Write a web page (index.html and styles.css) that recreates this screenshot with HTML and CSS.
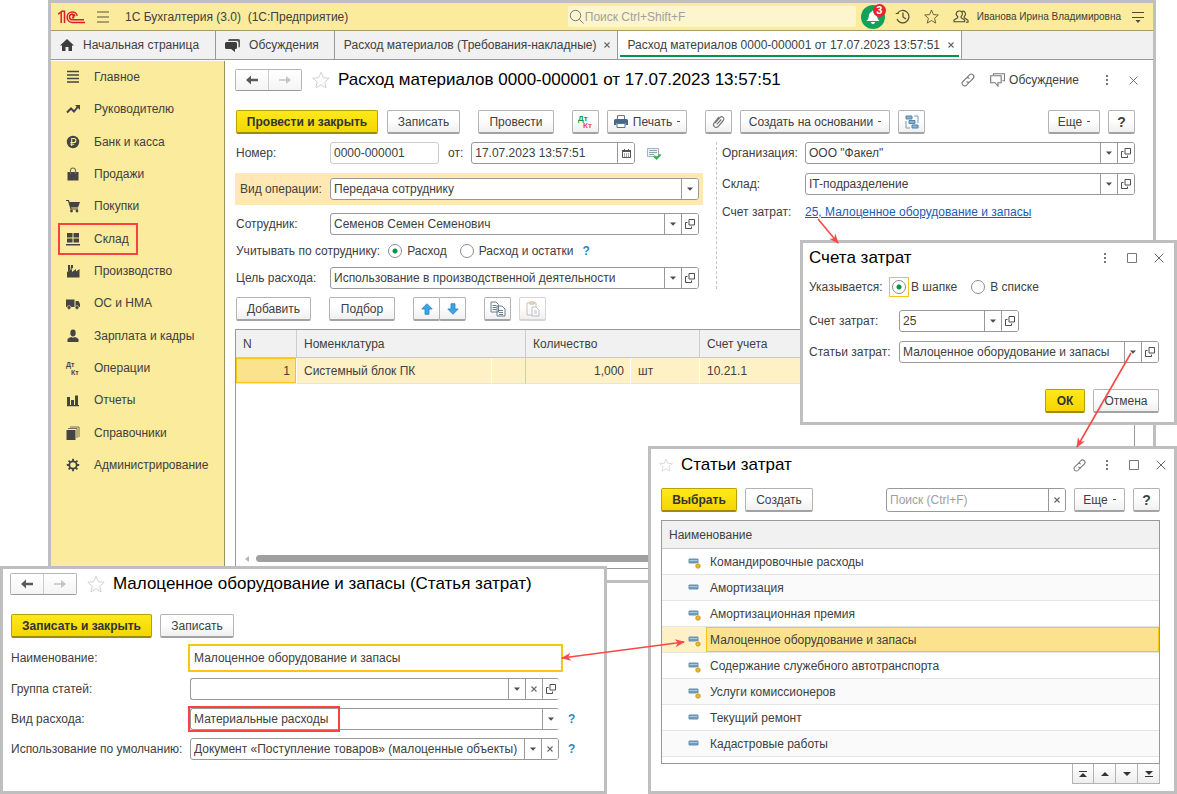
FILE: index.html
```html
<!DOCTYPE html>
<html lang="ru">
<head>
<meta charset="utf-8">
<title>1С Бухгалтерия (3.0)</title>
<link rel="stylesheet" href="styles.css">
</head>
<body>
<svg class="sprite" aria-hidden="true">
  <symbol id="i-down" viewBox="0 0 8 8"><path d="M1 2.500h6L4 5.800z" fill="#4d4d4d"/></symbol>
  <symbol id="i-open" viewBox="0 0 10 10"><path d="M4 .5h5.500v5.500H4zM2.500 3.500h-2v6h6v-2" fill="none" stroke="#4d4d4d"/></symbol>
  <symbol id="i-x" viewBox="0 0 8 8"><path d="M1.500 1.500l5 5M6.500 1.500l-5 5" stroke="#666" stroke-width="1.100"/></symbol>
  <symbol id="i-close" viewBox="0 0 10 10"><path d="M.7.7l8.600 8.600M9.300.7L.7 9.300" stroke="#666"/></symbol>
  <symbol id="i-square" viewBox="0 0 10 10"><path d="M.5.5h9v9h-9z" fill="none" stroke="#777"/></symbol>
  <symbol id="i-dots" viewBox="0 0 4 12"><path d="M1 1h2v2H1zM1 5h2v2H1zM1 9h2v2H1z" fill="#777"/></symbol>
  <symbol id="i-left" viewBox="0 0 14 10"><path d="M1 5l5-4.500v3.300h7v2.400H6v3.300z" fill="#5a5a5a"/></symbol>
  <symbol id="i-right" viewBox="0 0 14 10"><path d="M13 5L8 .9v3.300H1v1.600h7v3.300z" fill="#c4c4c4"/></symbol>
  <symbol id="i-star" viewBox="0 0 18 18"><path d="M9 1.200l2.300 5.500 5.900.5-4.500 3.900 1.400 5.800L9 13.800l-5.100 3.100 1.400-5.800L.8 7.200l5.900-.5z" fill="none" stroke="currentColor" stroke-linejoin="round"/></symbol>
  <symbol id="i-link" viewBox="0 0 14 14"><g fill="none" stroke="#777" stroke-width="1.100" stroke-linecap="round"><path d="M6 4.500l2.400-2.600a2.500 2.500 0 0 1 3.700 3.600L9 8.600a2.300 2.300 0 0 1-3 .2"/><path d="M8 9.500l-2.400 2.600a2.500 2.500 0 0 1-3.700-3.600L5 5.400a2.300 2.300 0 0 1 3-.2"/></g></symbol>
  <symbol id="i-item" viewBox="0 0 14 12"><path d="M1 2h9v4H1z" fill="#6d9dc2" stroke="#6f8fa8"/><path d="M1.500 3h8v1h-8z" fill="#a5c7de"/></symbol>
  <symbol id="i-pin" viewBox="0 0 14 12"><path d="M1 2h9v4H1z" fill="#6d9dc2" stroke="#6f8fa8"/><path d="M1.500 3h8v1h-8z" fill="#a5c7de"/><circle cx="10" cy="9" r="3" fill="#fff"/><circle cx="10" cy="9" r="2.300" fill="#e9b82d" stroke="#b98f18" stroke-width=".7"/></symbol>
</svg>

<main class="desk">
<section class="window win-main">
  <header class="appbar">
    <svg class="logo" width="27" height="14" viewBox="0 0 27 14" role="img" aria-label="1С"><g fill="none" stroke="#dc1f26" stroke-width="1.500"><path d="M0 4.200L3.200 2V13"/><path d="M3.500 1.200h3V13"/><path d="M19.300 5.700A5.200 5.200 0 1 0 14.500 12.400H27"/><path d="M17 6.400A2.800 2.800 0 1 0 14.500 9.800H26"/><path d="M14.300 5.800h1.200v2h-1.500"/></g></svg>
    <button class="ico burger" aria-label="Меню"><svg width="14" height="12"><path d="M1 1h12M1 6h12M1 11h12" stroke="#5a5539" stroke-width="1.100"/></svg></button>
    <h1 class="app-name">1С Бухгалтерия (3.0)&nbsp; (1С:Предприятие)</h1>
    <label class="global-search"><svg width="16" height="16" viewBox="0 0 16 16"><circle cx="6.500" cy="6.500" r="5.200" fill="none" stroke="#777"/><path d="M10.500 10.500l4 4" stroke="#777"/></svg><input type="text" placeholder="Поиск Ctrl+Shift+F" aria-label="Поиск"></label>
    <button class="ico bell" aria-label="Уведомления"><svg width="24" height="24" viewBox="0 0 24 24"><circle cx="12" cy="12" r="12" fill="#14a15b"/><path d="M12 5.500a1.400 1.400 0 0 1 1.300 1.300c2 .8 2.700 2.200 2.900 4.200.2 2.500.8 3.600 2.300 5H5.500c1.500-1.400 2.100-2.500 2.300-5 .2-2 .9-3.400 2.900-4.200A1.400 1.400 0 0 1 12 5.500zM10 17h4a2 2 0 0 1-4 0z" fill="#fff"/></svg><span class="badge">3</span></button>
    <button class="ico" aria-label="История"><svg width="15" height="15" viewBox="0 0 15 15"><g fill="none" stroke="#4d4a3a" stroke-width="1.200"><path d="M2.400 4.500A6.200 6.200 0 1 1 2 10"/><path d="M.7 4.500h3M8 3.500V8l3 2"/></g></svg></button>
    <button class="ico dark" aria-label="Избранное"><svg width="15" height="15"><use href="#i-star"/></svg></button>
    <button class="ico" aria-label="Пользователи"><svg width="16" height="14" viewBox="0 0 16 14"><g fill="none" stroke="#4d4a3a" stroke-width="1.100"><path d="M6.500 1a2.600 2.900 0 0 1 1.600 5.400v1.400l3.600 2.200v1.800H1v-1.800l3.700-2.200V6.400A2.900 2.900 0 0 1 6.500 1z"/><path d="M9 1.400a2.500 2.800 0 0 1 2.200 5v1.300l3.800 2.500v2h-2"/></g></svg></button>
    <span class="user">Иванова Ирина Владимировна</span>
    <button class="ico" aria-label="Настройки"><svg width="14" height="12"><path d="M1 1.500h12M1 6.500h12" stroke="#4d4a3a" stroke-width="1.200"/><path d="M4.500 9h5L7 12z" fill="#4d4a3a"/></svg></button>
  </header>
  <nav class="tabs" aria-label="Окна">
    <a href="#" class="tab tab-home"><svg width="14" height="12" viewBox="0 0 14 12"><path d="M7 0l7 6.500h-2V12H8.500V8h-3v4H2V6.500H0z" fill="#3d3d3d"/></svg>Начальная страница</a>
    <a href="#" class="tab tab-talk"><svg width="15" height="13" viewBox="0 0 15 13"><path d="M4.500 0h9Q15 0 15 1.500V7q0 1.500-1.500 1.500V4q0-2-2-2H3q0-2 1.500-2z" fill="#555"/><path d="M1.500 3h9q1.500 0 1.500 1.500v4q0 1.500-1.500 1.500H10v3L6 10H1.500Q0 10 0 8.500v-4Q0 3 1.500 3z" fill="#3d3d3d"/></svg>Обсуждения</a>
    <a href="#" class="tab tab-doc">Расход материалов (Требования-накладные)<svg width="8" height="8"><use href="#i-x"/></svg></a>
    <a href="#" class="tab tab-doc active">Расход материалов 0000-000001 от 17.07.2023 13:57:51<svg width="8" height="8"><use href="#i-x"/></svg></a>
  </nav>
  <div class="workspace">
    <nav class="sidebar" aria-label="Разделы">
      <ul>
        <li><a href="#"><svg viewBox="0 0 14 14"><path d="M1 1.500h12M1 5h12M1 8.500h12M1 12h12" stroke="#444" stroke-width="1.500"/></svg><span>Главное</span></a></li>
        <li><a href="#"><svg viewBox="0 0 14 14"><path d="M1 10.500l4-4 3 3 4-5" fill="none" stroke="#444" stroke-width="2"/><path d="M9 3h5v5z" fill="#444"/></svg><span>Руководителю</span></a></li>
        <li><a href="#"><svg viewBox="0 0 14 14"><circle cx="7" cy="7" r="6.200" fill="#444"/><path d="M5.700 11V3.500h2.200a2 2 0 0 1 0 4H4.300M4.300 9.200h4" fill="none" stroke="#faeb9d" stroke-width="1.100"/></svg><span>Банк и касса</span></a></li>
        <li><a href="#"><svg viewBox="0 0 14 14"><path d="M1.500 5h11v8.500h-11z" fill="#444"/><path d="M4.500 7V3.500a2.500 2.500 0 0 1 5 0V7" fill="none" stroke="#77704f" stroke-width="1.100"/></svg><span>Продажи</span></a></li>
        <li><a href="#"><svg viewBox="0 0 14 14"><path d="M0 1.500h2.500L5 10h7" fill="none" stroke="#444" stroke-width="1.200"/><path d="M3 3h11l-2 5.500H4.500z" fill="#444"/><circle cx="5.500" cy="12" r="1.400" fill="#444"/><circle cx="11" cy="12" r="1.400" fill="#444"/></svg><span>Покупки</span></a></li>
        <li class="marked"><a href="#"><svg viewBox="0 0 14 14"><path d="M1 1h5.500v4.500H1zM7.500 1H13v4.500H7.500zM1 6.500h5.500v4H1zM7.500 6.500H13v4H7.500zM0 12h14v1.500H0z" fill="#444"/></svg><span>Склад</span></a></li>
        <li><a href="#"><svg viewBox="0 0 14 14"><path d="M1 13.500V8l5-3v3l4-3v2.500L13.500 5v8.500z" fill="#444"/><path d="M2 1h2l.5 5L2 7.500zM5 1h2v3L5 5z" fill="#444"/></svg><span>Производство</span></a></li>
        <li><a href="#"><svg viewBox="0 0 14 14"><path d="M0 3.500h8.500V11H0zM9.500 5h3L14 8v3H9.500z" fill="#444"/><circle cx="3" cy="11.500" r="1.900" fill="#444" stroke="#faeb9d" stroke-width=".6"/><circle cx="11" cy="11.500" r="1.900" fill="#444" stroke="#faeb9d" stroke-width=".6"/></svg><span>ОС и НМА</span></a></li>
        <li><a href="#"><svg viewBox="0 0 14 14"><ellipse cx="7" cy="4" rx="2.700" ry="3.400" fill="#444"/><path d="M1.500 13v-2.500Q1.500 9 5.500 8q1.500 1.500 3 0 4 1 4 2.500V13z" fill="#444"/></svg><span>Зарплата и кадры</span></a></li>
        <li><a href="#"><svg viewBox="0 0 14 14"><text x="0" y="6" font-size="7" font-weight="700" fill="#444">Дт</text><text x="5" y="14" font-size="7" font-weight="700" fill="#444">Кт</text></svg><span>Операции</span></a></li>
        <li><a href="#"><svg viewBox="0 0 14 14"><path d="M1 4h3v8H1zM5 7h3v5H5zM9 2.500h3V12H9zM1 12h12v1.200H1z" fill="#444"/></svg><span>Отчеты</span></a></li>
        <li><a href="#"><svg viewBox="0 0 14 14"><path d="M.5 4h9v10h-9z" fill="#444"/><path d="M2 2.500h9V12M4 1h9v10" fill="none" stroke="#77704f"/></svg><span>Справочники</span></a></li>
        <li><a href="#"><svg viewBox="0 0 14 14"><circle cx="7" cy="7" r="3.700" fill="none" stroke="#444" stroke-width="1.800"/><path d="M7 .8v2.400M7 10.800v2.400M.8 7h2.400M10.800 7h2.400M2.600 2.600l1.700 1.700M9.700 9.700l1.700 1.700M11.400 2.600L9.700 4.300M4.300 9.700l-1.700 1.700" stroke="#444" stroke-width="1.800"/></svg><span>Администрирование</span></a></li>
      </ul>
    </nav>
    <div class="document">
      <div class="head">
        <div class="pair"><button aria-label="Назад"><svg width="14" height="10"><use href="#i-left"/></svg></button><button aria-label="Вперед"><svg width="14" height="10"><use href="#i-right"/></svg></button></div>
        <button class="ico star" aria-label="В избранное"><svg width="18" height="18"><use href="#i-star"/></svg></button>
        <h2>Расход материалов 0000-000001 от 17.07.2023 13:57:51</h2>
        <div class="head-tools">
          <button class="ico" aria-label="Ссылка"><svg width="14" height="14"><use href="#i-link"/></svg></button>
          <button class="ico discuss"><svg width="15" height="14" viewBox="0 0 15 14"><path d="M3.500 2V.7h11v7h-2M.7 2.700h10.500v7H8V13L5 9.700H.7z" fill="none" stroke="#777" stroke-width="1.100"/></svg>Обсуждение</button>
          <button class="ico" aria-label="Еще"><svg width="4" height="12"><use href="#i-dots"/></svg></button>
          <button class="ico" aria-label="Закрыть"><svg width="9" height="9"><use href="#i-close"/></svg></button>
        </div>
      </div>
      <div class="commands">
        <button class="btn primary w142">Провести и закрыть</button>
        <button class="btn w73">Записать</button>
        <button class="btn w76 after">Провести</button>
        <button class="btn w27 after" aria-label="Проводки"><svg width="16" height="16" viewBox="0 0 16 16"><text x="0" y="7" font-size="8" font-weight="700" fill="#0c9a4b">Дт</text><text x="5" y="14" font-size="8" font-weight="700" fill="#ee4b4b">Кт</text></svg></button>
        <button class="btn w80"><svg width="14" height="13" viewBox="0 0 14 13"><path d="M3.500 4V.6h7V4" fill="#fff" stroke="#54748f"/><path d="M1.500 4h11Q14 4 14 5.500V10h-2.500V8h-9v2H0V5.500Q0 4 1.500 4z" fill="#45698a"/><path d="M3 8.500h8v4H3z" fill="#fff" stroke="#54748f"/></svg>Печать<i class="caret"></i></button>
        <button class="btn w27 after" aria-label="Файлы"><svg width="14" height="14" viewBox="0 0 14 14"><path d="M3 8l5-5.500a2.200 2.200 0 0 1 3.300 3L6 11.800a2.800 2.800 0 0 1-4-3.800L7 2M4.800 9.300l4.500-4.800" fill="none" stroke="#777" stroke-width="1.200"/></svg></button>
        <button class="btn w150">Создать на основании<i class="caret"></i></button>
        <button class="btn w27" aria-label="Структура"><svg width="14" height="14" viewBox="0 0 14 14"><path d="M1 1h6v3H1zM4 5.500h6v3H4zM7 10h6v3H7z" fill="#8db3d0" stroke="#4f83ab"/><path d="M9 1h4v7M1 6v7h4" fill="none" stroke="#6d9dc2"/></svg></button>
        <button class="btn w52 push">Еще<i class="caret"></i></button>
        <button class="btn w27 bold">?</button>
      </div>
      <div class="forms">
        <div class="form-left">
          <div class="row"><label for="num">Номер:</label>
            <div class="field light w109"><input id="num" type="text" value="0000-000001"></div>
            <label class="from" for="date">от:</label>
            <div class="field w164"><input id="date" type="text" value="17.07.2023 13:57:51"><button aria-label="Календарь"><svg width="9" height="9" viewBox="0 0 9 9"><path d="M.5 1.500h8v7h-8z" fill="#fff" stroke="#555"/><path d="M0 1h9v2H0zM2 0h1v1H2zM6 0h1v1H6z" fill="#555"/><path d="M2 5h5M2 7h5" stroke="#555" stroke-dasharray="1 1"/></svg></button></div>
            <svg class="posted" width="14" height="13" viewBox="0 0 14 13"><path d="M.5 1.500h11v8H.5z" fill="#f2f6f8" stroke="#a2b2bd"/><path d="M2 3.500h8M2 5.500h8M2 7.500h5" stroke="#8fa3b0"/><path d="M7 9l2.500 2.500 4-4" fill="none" stroke="#35b34a" stroke-width="2"/></svg>
          </div>
          <div class="row band"><label for="op">Вид операции:</label>
            <div class="field grow"><select id="op"><option>Передача сотруднику</option></select><span class="slot"><svg width="8" height="8"><use href="#i-down"/></svg></span></div></div>
          <div class="row"><label for="emp">Сотрудник:</label>
            <div class="field grow"><input id="emp" type="text" value="Семенов Семен Семенович"><button aria-label="Выбрать"><svg width="8" height="8"><use href="#i-down"/></svg></button><button aria-label="Открыть"><svg width="10" height="10"><use href="#i-open"/></svg></button></div></div>
          <div class="row radios"><span>Учитывать по сотруднику:</span>
            <label><input type="radio" name="acc" checked>Расход</label>
            <label><input type="radio" name="acc">Расход и остатки</label>
            <a href="#" class="hint">?</a></div>
          <div class="row"><label for="goal">Цель расхода:</label>
            <div class="field grow"><input id="goal" type="text" value="Использование в производственной деятельности"><button aria-label="Выбрать"><svg width="8" height="8"><use href="#i-down"/></svg></button><button aria-label="Открыть"><svg width="10" height="10"><use href="#i-open"/></svg></button></div></div>
        </div>
        <div class="form-right">
          <div class="row"><label for="org">Организация:</label>
            <div class="field grow"><input id="org" type="text" value="ООО &quot;Факел&quot;"><button aria-label="Выбрать"><svg width="8" height="8"><use href="#i-down"/></svg></button><button aria-label="Открыть"><svg width="10" height="10"><use href="#i-open"/></svg></button></div></div>
          <div class="row"><label for="store">Склад:</label>
            <div class="field grow"><input id="store" type="text" value="IT-подразделение"><button aria-label="Выбрать"><svg width="8" height="8"><use href="#i-down"/></svg></button><button aria-label="Открыть"><svg width="10" height="10"><use href="#i-open"/></svg></button></div></div>
          <div class="row link-row"><span>Счет затрат:</span><a href="#">25, Малоценное оборудование и запасы</a></div>
        </div>
      </div>
      <div class="commands table-tools">
        <button class="btn w75">Добавить</button>
        <button class="btn w66 wide">Подбор</button>
        <div class="joined wide"><button class="btn" aria-label="Вверх"><svg width="12" height="12" viewBox="0 0 12 12"><path d="M6 .7L11.200 6H8v5.300H4V6H.8z" fill="#3aa5ea" stroke="#2b7fb5" stroke-width=".8"/></svg></button><button class="btn" aria-label="Вниз"><svg width="12" height="12" viewBox="0 0 12 12"><path d="M6 11.300L.8 6H4V.7h4V6h3.200z" fill="#3aa5ea" stroke="#2b7fb5" stroke-width=".8"/></svg></button></div>
        <button class="btn w27 wide" aria-label="Копировать"><svg width="16" height="16" viewBox="0 0 16 16"><g fill="#fff" stroke="#6b7f90"><path d="M1 1h5l2.500 2.500V11H1zM7 5h5l3 3v7H7z"/><path d="M2.500 4.500h4M2.500 6.500h4M2.500 8.500h4M9 9.500h4M9 11.500h4M9 13.500h4"/></g></svg></button>
        <button class="btn w27 faded" aria-label="Вставить"><svg width="16" height="16" viewBox="0 0 16 16"><g fill="#fff" stroke="#9a7448"><path d="M2 2h9v12H2zM5 .8h4v2.400H5z"/><path d="M7 6h4l3 3v6H7zM9 10h3M9 12h3" stroke="#6b7f90"/></g></svg></button>
      </div>
      <div class="table-box">
        <table class="goods">
          <colgroup><col class="c61"><col class="c195"><col class="c34"><col class="c105"><col class="c69"><col></colgroup>
          <thead><tr><th>N</th><th colspan="2">Номенклатура</th><th colspan="2">Количество</th><th>Счет учета</th></tr></thead>
          <tbody><tr><td class="current num">1</td><td>Системный блок ПК</td><td></td><td class="num group">1,000</td><td>шт</td><td>10.21.1</td></tr></tbody>
        </table>
        <div class="hscroll"><svg width="4" height="6"><path d="M4 0v6L0 3z" fill="#b5b5b5"/></svg><span></span></div>
      </div>
    </div>
  </div>
</section>

<section class="window win-accounts">
  <div class="dlg-head"><h2>Счета затрат</h2>
    <div class="win-tools"><button class="ico" aria-label="Еще"><svg width="4" height="12"><use href="#i-dots"/></svg></button><button class="ico" aria-label="Развернуть"><svg width="10" height="10"><use href="#i-square"/></svg></button><button class="ico" aria-label="Закрыть"><svg width="10" height="10"><use href="#i-close"/></svg></button></div></div>
  <div class="row radios"><span>Указывается:</span>
    <label><span class="focus"><input type="radio" name="place" checked></span>В шапке</label>
    <label><input type="radio" name="place">В списке</label></div>
  <div class="row"><label for="acct">Счет затрат:</label><div class="field w120"><input id="acct" type="text" value="25"><button aria-label="Выбрать"><svg width="8" height="8"><use href="#i-down"/></svg></button><button aria-label="Открыть"><svg width="10" height="10"><use href="#i-open"/></svg></button></div></div>
  <div class="row"><label for="art">Статьи затрат:</label><div class="field grow"><input id="art" type="text" value="Малоценное оборудование и запасы"><button aria-label="Выбрать"><svg width="8" height="8"><use href="#i-down"/></svg></button><button aria-label="Открыть"><svg width="10" height="10"><use href="#i-open"/></svg></button></div></div>
  <div class="dlg-foot"><button class="btn primary w40">ОК</button><button class="btn w66">Отмена</button></div>
</section>

<section class="window win-articles">
  <div class="dlg-head"><button class="ico star" aria-label="В избранное"><svg width="14" height="14"><use href="#i-star"/></svg></button><h2>Статьи затрат</h2>
    <div class="win-tools"><button class="ico" aria-label="Ссылка"><svg width="13" height="13"><use href="#i-link"/></svg></button><button class="ico" aria-label="Еще"><svg width="4" height="12"><use href="#i-dots"/></svg></button><button class="ico" aria-label="Развернуть"><svg width="10" height="10"><use href="#i-square"/></svg></button><button class="ico" aria-label="Закрыть"><svg width="10" height="10"><use href="#i-close"/></svg></button></div></div>
  <div class="commands">
    <button class="btn primary w76">Выбрать</button><button class="btn w68">Создать</button>
    <div class="field push w180 tall"><input type="text" placeholder="Поиск (Ctrl+F)" aria-label="Поиск"><button aria-label="Очистить"><svg width="8" height="8"><use href="#i-x"/></svg></button></div>
    <button class="btn w51">Еще<i class="caret"></i></button><button class="btn w27 bold">?</button>
  </div>
  <div class="list-box">
    <table class="articles">
      <colgroup><col class="c44"><col></colgroup>
      <thead><tr><th colspan="2">Наименование</th></tr></thead>
      <tbody>
        <tr><td><svg width="14" height="12"><use href="#i-pin"/></svg></td><td>Командировочные расходы</td></tr>
        <tr><td><svg width="14" height="12"><use href="#i-item"/></svg></td><td>Амортизация</td></tr>
        <tr><td><svg width="14" height="12"><use href="#i-pin"/></svg></td><td>Амортизационная премия</td></tr>
        <tr class="selected"><td><svg width="14" height="12"><use href="#i-pin"/></svg></td><td class="current">Малоценное оборудование и запасы</td></tr>
        <tr><td><svg width="14" height="12"><use href="#i-pin"/></svg></td><td>Содержание служебного автотранспорта</td></tr>
        <tr><td><svg width="14" height="12"><use href="#i-pin"/></svg></td><td>Услуги комиссионеров</td></tr>
        <tr><td><svg width="14" height="12"><use href="#i-item"/></svg></td><td>Текущий ремонт</td></tr>
        <tr><td><svg width="14" height="12"><use href="#i-item"/></svg></td><td>Кадастровые работы</td></tr>
      </tbody>
    </table>
  </div>
  <div class="pager">
    <button aria-label="В начало"><svg width="8" height="6"><path d="M0 0h8v1H0zM0 6h8L4 2z" fill="#333"/></svg></button>
    <button aria-label="Выше"><svg width="8" height="6"><path d="M0 5h8L4 1z" fill="#333"/></svg></button>
    <button aria-label="Ниже"><svg width="8" height="6"><path d="M0 1h8L4 5z" fill="#333"/></svg></button>
    <button aria-label="В конец"><svg width="8" height="6"><path d="M0 0h8L4 4zM0 5h8v1H0z" fill="#333"/></svg></button>
  </div>
</section>

<section class="window win-card">
  <div class="head">
    <div class="pair"><button aria-label="Назад"><svg width="14" height="10"><use href="#i-left"/></svg></button><button aria-label="Вперед"><svg width="14" height="10"><use href="#i-right"/></svg></button></div>
    <button class="ico star" aria-label="В избранное"><svg width="18" height="18"><use href="#i-star"/></svg></button>
    <h2>Малоценное оборудование и запасы (Статья затрат)</h2>
  </div>
  <div class="commands"><button class="btn primary w141">Записать и закрыть</button><button class="btn w74">Записать</button></div>
  <div class="card-form">
    <div class="row"><label for="name">Наименование:</label><div class="field focused"><input id="name" type="text" value="Малоценное оборудование и запасы"></div></div>
    <div class="row"><label for="grp">Группа статей:</label><div class="field grow open"><input id="grp" type="text"><button aria-label="Выбрать"><svg width="8" height="8"><use href="#i-down"/></svg></button><button aria-label="Очистить"><svg width="8" height="8"><use href="#i-x"/></svg></button><button aria-label="Открыть"><svg width="10" height="10"><use href="#i-open"/></svg></button></div><span class="hint"></span></div>
    <div class="row"><label for="kind">Вид расхода:</label><div class="field grow open"><select id="kind"><option>Материальные расходы</option></select><span class="slot"><svg width="8" height="8"><use href="#i-down"/></svg></span></div><a href="#" class="hint">?</a><span class="frame"></span></div>
    <div class="row"><label for="use">Использование по умолчанию:</label><div class="field grow"><input id="use" type="text" value="Документ «Поступление товаров» (малоценные объекты)"><button aria-label="Выбрать"><svg width="8" height="8"><use href="#i-down"/></svg></button><button aria-label="Очистить"><svg width="8" height="8"><use href="#i-x"/></svg></button></div><a href="#" class="hint">?</a></div>
  </div>
</section>

<svg class="arrows" width="1177" height="794" viewBox="0 0 1177 794" aria-hidden="true">
  <defs><marker id="tip" viewBox="0 0 10 10" refX="9" refY="5" markerWidth="10" markerHeight="10" markerUnits="userSpaceOnUse" orient="auto-start-reverse"><path d="M0 1l10 4-10 4 3-4z" fill="#fb4747"/></marker></defs>
  <g stroke="#fb4747" stroke-width="1.600" fill="none">
    <path d="M818 219L838 243" marker-end="url(#tip)"/>
    <path d="M1131 353L1077 447" marker-end="url(#tip)"/>
    <path d="M562 658L684 642" marker-start="url(#tip)" marker-end="url(#tip)"/>
  </g>
</svg>
</main>
</body>
</html>
```
FILE: styles.css
```css
* { box-sizing: border-box; }
body { margin: 0; background: #fff; color: #404040; font: 12px/16px "Liberation Sans", Arial, sans-serif; }
button, input, select { font: inherit; color: inherit; margin: 0; padding: 0; }
button { cursor: pointer; }
h1, h2, ul { margin: 0; padding: 0; }
svg { display: block; flex: none; font-family: "Liberation Sans", Arial, sans-serif; }
svg[viewBox="0 0 14 14"] { overflow: visible; }
.sprite { position: absolute; width: 0; height: 0; }

/* Desktop and windows */
.desk { position: relative; min-height: 794px; overflow: hidden; }
.window { position: absolute; background: #fff; border: 3px solid #bfbfbf; display: flex; flex-direction: column; }
.win-main { left: 48px; right: 21px; top: 0; min-height: 583px; }
.win-accounts { left: 800px; right: 0; top: 240px; min-height: 185px; padding: 0 15px 9px 6px; }
.win-articles { left: 648px; right: 0; top: 446px; min-height: 348px; padding: 0 14px 7px 10px; }
.win-card { left: 0; top: 566px; width: 607px; min-height: 228px; padding: 4px 8px; }
.arrows { position: absolute; left: 0; top: 0; pointer-events: none; }

/* Application bar */
.appbar { display: flex; align-items: center; height: 28px; background: #faeb9d; border-bottom: 1px solid #a69c68; padding: 0 8px 0 7px; }
.ico { display: flex; align-items: center; justify-content: center; background: none; border: 0; color: #404040; }
.burger { margin: 0 15px 0 11px; }
.app-name { font-size: 12px; font-weight: 400; flex: 1; white-space: nowrap; }
.global-search { display: flex; align-items: center; width: 288px; height: 21px; background: #fdf5ce; border-radius: 2px; padding-left: 1px; }
.global-search input { flex: 1; min-width: 0; border: 0; background: none; outline: 0; }
::placeholder { color: #a0a0a0; opacity: 1; }
.bell { position: relative; margin: 0 10px 0 5px; }
.badge { position: absolute; right: -1px; top: -1px; width: 13px; height: 13px; border-radius: 50%; background: #e3262e; color: #fff; font-size: 11px; line-height: 13px; font-weight: 700; text-align: center; }
.dark { color: #4d4a3a; margin: 0 14px; }
.user { font-size: 10px; margin: 0 10px 0 8px; white-space: nowrap; }

/* Tabs */
.tabs { display: flex; height: 29px; background: #f1f1f1; border-bottom: 1px solid #999; }
.tab { display: flex; align-items: center; color: #404040; text-decoration: none; white-space: nowrap; border-right: 1px solid #999; }
.tab-home { padding: 0 16px 0 9px; gap: 9px; }
.tab-talk { padding: 0 15px 0 9px; gap: 9px; }
.tab-doc { padding: 0 6px 0 9px; gap: 7px; }
.active { background: linear-gradient(#009646, #009646) center 24px / calc(100% - 4px) 2px no-repeat #fff; }

/* Section list */
.workspace { display: flex; flex: 1; padding-top: 1px; }
.sidebar { width: 174px; background: #faeb9d; border-right: 1px solid #9b9260; }
.sidebar ul { display: flex; flex-direction: column; height: 420px; list-style: none; }
.sidebar li { flex: 1; display: flex; padding: 0 7px; }
.sidebar a { display: flex; align-items: center; gap: 14px; padding-left: 8px; color: #404040; text-decoration: none; }
.sidebar a svg { width: 14px; height: 14px; }
.marked a { outline: 2px solid #fb4141; outline-offset: -2px; padding-right: 9px; }

/* Document */
.document { flex: 1; min-width: 0; padding: 8px 18px 11px 10px; display: flex; flex-direction: column; }
.head { display: flex; align-items: center; height: 22px; }
h2 { font-size: 17px; line-height: 20px; font-weight: 400; color: #000; white-space: nowrap; }
.pair { display: flex; width: 67px; height: 22px; border: 1px solid #b5b5b5; border-bottom-color: #999; border-radius: 2px; }
.pair button { flex: 1; display: flex; align-items: center; justify-content: center; background: linear-gradient(#fff, #f5f5f5); border: 0; }
.pair button + button { border-left: 1px solid #ccc; }
.star { color: #d2d2d2; }
.head .star { margin: 0 8px 0 10px; }
.head-tools { display: flex; align-items: center; margin-left: auto; margin-right: -3px; }
.head-tools .ico { margin-left: 15px; }
.head-tools .ico:nth-child(3) { margin: 0 20px 0 26px; }
.head-tools .ico:last-child { margin: 0; }
.discuss { gap: 4px; }
.commands { display: flex; align-items: center; gap: 8px; }
.document > .commands { margin-top: 19px; padding-left: 1px; }
.btn { display: flex; align-items: center; justify-content: center; gap: 5px; height: 24px; border: 1px solid #b3b3b3; border-bottom: 2px solid #a3a3a3; border-radius: 2px; background: linear-gradient(#fff 40%, #f0f0f0); white-space: nowrap; flex: none; }
.primary { background: linear-gradient(#ffe91a, #f5d500); border-color: #b8a100; border-bottom-color: #a08c00; font-weight: 700; color: #333; }
.bold { font-weight: 700; font-size: 14px; }
.caret { width: 3px; height: 1px; border-top: 1px solid #555; }
.w27 { width: 27px; } .w40 { width: 40px; } .w51 { width: 51px; } .w52 { width: 52px; } .w66 { width: 66px; }
.w68 { width: 68px; } .w73 { width: 73px; } .w74 { width: 74px; } .w75 { width: 75px; } .w76 { width: 76px; }
.w80 { width: 80px; } .w109 { width: 109px; } .w120 { width: 120px; } .w141 { width: 141px; } .w142 { width: 142px; }
.w150 { width: 150px; } .w164 { width: 164px; } .w180 { width: 180px; }
.document .commands .btn.w73 { margin-left: 1px; }
.after { margin-left: 10px; }
.wide { margin-left: 10px; }
.push { margin-left: auto; }
.faded svg { opacity: .45; }
.faded { border-color: #d5d5d5; }
.joined { display: flex; }
.joined .btn { width: 27px; }
.joined .btn + .btn { margin-left: -1px; }

/* Form rows */
.forms { display: grid; grid-template-columns: 468fr 14fr 418fr; padding-top: 8px; }
.form-left { display: flex; flex-direction: column; }
.form-right { grid-column: 3; padding-left: 5px; border-left: 1px dashed #c4c4c4; margin-left: -1px; }
.row { display: flex; align-items: center; }
.row > label:first-child { flex: none; white-space: nowrap; }
.form-left .row { padding: 0 4px 0 1px; }
.form-left .row > label:first-child { width: 94px; }
.form-left .band { background: #ffe8b3; margin: 9px 0 8px; padding: 5px 4px 5px 5px; }
.form-left .band > label:first-child { width: 90px; }
.form-left .radios { margin: 5px 0 6px; }
.form-right .row { margin-bottom: 9px; }
.form-right .row > :first-child { width: 83px; flex: none; }
.form-right a { color: #1e5bb5; }
.field { display: flex; height: 22px; border: 1px solid #999; border-radius: 3px; background: #fff; min-width: 0; overflow: hidden; }
.field input, .field select { flex: 1; min-width: 0; width: 0; border: 0; outline: 0; background: none; padding: 0 0 0 3px; appearance: none; }
.field button, .slot { display: flex; align-items: center; justify-content: center; width: 17px; flex: none; border: 0; border-left: 1px solid #999; background: #fff; }
.light { border-color: #ccc; }
.grow { flex: 1; }
.tall { height: 24px; }
.from { margin: 0 8px 0 9px; }
.posted { margin-left: 12px; }
.radios { height: 21px; }
.radios label { display: flex; align-items: center; gap: 5px; }
.form-left .radios label { margin-left: 8px; }
.form-left .radios label + label { margin-left: 13px; }
input[type="radio"] { appearance: none; width: 14px; height: 14px; border: 1px solid #8c8c8c; border-radius: 50%; background: #fff; }
input[type="radio"]:checked { background: radial-gradient(circle, #009646 2px, #fff 3px); }
.hint { color: #2b86c5; font-weight: 700; text-decoration: none; margin-left: 9px; }

/* Goods table */
.table-tools.commands { margin-top: 8px; }
.table-box { display: flex; flex-direction: column; flex: 1; margin-top: 8px; border: 1px solid #999; }
table { border-collapse: separate; border-spacing: 0; table-layout: fixed; width: 100%; }
th { font-weight: 400; text-align: left; background: #f1f1f1; border-bottom: 1px solid #c8c8c8; height: 28px; padding: 0 7px; }
.goods th + th, .goods td + td { border-left: 1px solid #ccc; }
.goods td { height: 26px; padding: 0 7px; background: #fef1c5; border-bottom: 1px solid #e4e4e4; }
.goods td + td { border-left-color: #fff; }
.goods td.group { border-left-color: #ccc; }
.goods .num { text-align: right; padding-right: 6px; }
.goods td.current, .list-box tr.selected td.current { background: #fbe38e; box-shadow: inset 0 0 0 1px #f5c518; }
.c61 { width: 60px; } .c195 { width: 195px; } .c34 { width: 34px; } .c105 { width: 105px; } .c69 { width: 69px; } .c44 { width: 44px; }
.hscroll { display: flex; align-items: center; gap: 7px; margin-top: auto; padding: 0 9px 6px; }
.hscroll span { flex: 1; height: 7px; border-radius: 4px; background: #a0a0a0; }

/* Dialogs */
.dlg-head { display: flex; align-items: center; height: 29px; }
.win-tools { display: flex; margin-left: auto; align-items: center; }
.win-tools .ico { width: 27px; }
.win-accounts .win-tools { margin-right: -13px; }
.win-accounts .row { margin-bottom: 9px; }
.win-accounts .radios { margin: 4px 0 13px; }
.win-accounts .row > :first-child { width: 90px; }
.win-accounts .radios > :first-child { width: 80px; }
.win-accounts .radios label { gap: 2px; }
.win-accounts .radios label + label { margin-left: 14px; gap: 5px; }
.focus { display: flex; padding: 2px; border: 1px solid #f5c518; }
.dlg-foot { display: flex; justify-content: flex-end; gap: 8px; margin-top: auto; }
.win-articles .dlg-head { height: 31px; gap: 8px; padding-top: 1px; }
.win-articles .star { margin-left: -2px; }
.win-articles .win-tools { margin-right: -14px; }
.win-articles .commands { margin-top: 8px; }
.list-box { margin-top: 8px; border: 1px solid #999; flex: 1; }
.list-box td { height: 26px; padding: 0 0 0 4px; border-bottom: 1px solid #e4e4e4; }
.list-box td:first-child { padding: 3px 0 0 26px; }
.list-box tr:nth-child(even) td { background: #fafafa; }
.list-box tr.selected td { background: #fef1c5; }
.list-box th { padding-left: 7px; }
.pager { display: flex; justify-content: flex-end; }
.pager button { width: 22px; height: 20px; display: flex; align-items: center; justify-content: center; background: linear-gradient(#fff, #eee); border: 1px solid #b3b3b3; border-top: 0; border-left-width: 0; }
.pager button:first-child { border-left-width: 1px; }

/* Expense card */
.win-card .commands { margin-top: 19px; }
.win-card .head { margin-left: -1px; }
.card-form { display: flex; flex-direction: column; gap: 8px; padding-top: 6px; width: 564px; }
.card-form .row { height: 22px; position: relative; }
.card-form .row:first-child { height: 28px; margin-bottom: -2px; }
.card-form .row > label:first-child { width: 179px; }
.card-form .field.focused { flex: 1; height: 28px; margin: 0 12px 0 -2px; padding-left: 1px; border: 2px solid #f5c518; border-radius: 0; }
.card-form .open { border-right: 0; }
.card-form .hint { width: 7px; }
.frame { position: absolute; left: 177px; top: -2px; width: 152px; height: 26px; border: 2px solid #fb4141; }
```
